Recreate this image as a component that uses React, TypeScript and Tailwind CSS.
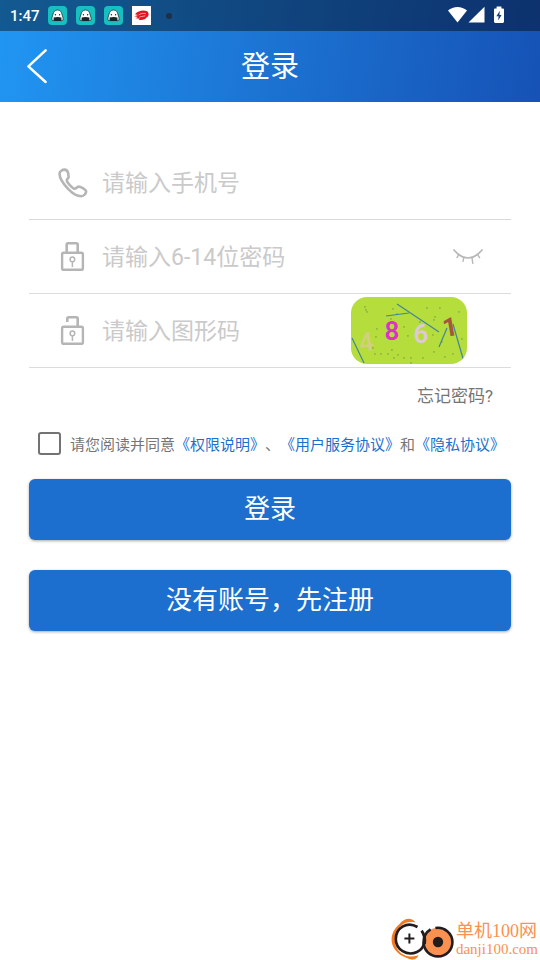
import React, { useState } from 'react';

const PhoneIcon = () => (
  <svg width="30" height="30" viewBox="0 0 30 30" fill="none" stroke="#b5b5b5" strokeWidth="2.6" strokeLinejoin="round">
    <path d="M1.6 5.2C1.8 3.4 4.4 1.6 6.4 1.6C8.6 1.6 9.8 3 10.2 5.2L10.6 8.6C10.7 10.4 8.6 11 8.8 12.6C9 14.6 14.6 20.4 16.6 20.8C18.2 21 18.8 18.6 20.6 18.6C22.4 18.6 27.6 21.2 28 23C28.4 25.4 26 28.2 23.2 28.2C19.6 28.2 14.6 25.4 10.8 21.6C6 16.6 1.2 9.4 1.6 5.2Z" />
  </svg>
);

const LockIcon = ({ open = false }) => (
  <svg width="30" height="30" viewBox="0 1 30 30" fill="none" stroke="#b5b5b5">
    {/* shackle */}
    <path strokeWidth="2.6" strokeLinejoin="round" d={open ? 'M9.3 7V3.6Q9.3 2.3 10.6 2.3H18.4Q19.7 2.3 19.7 3.6V11' : 'M8.7 11V3.6Q8.7 2.3 10 2.3H18.4Q19.7 2.3 19.7 3.6V11'} />
    <rect x="4.1" y="11.8" width="20.8" height="17" rx="1.6" strokeWidth="2.4" />
    <circle cx="14.4" cy="18.4" r="2.3" strokeWidth="1.5" />
    <path strokeWidth="1.5" d="M14.4 20.8V26" />
  </svg>
);

const ClosedEyeIcon = () => (
  <svg width="30" height="16" viewBox="0 0 30 16" fill="none" stroke="#b8b8b8" strokeLinecap="round">
    <path strokeWidth="1.7" d="M1 1C5 5.8 9.6 9 15 9S25 5.8 29 1" />
    <path strokeWidth="1.4" d="M5.6 5.8L4 8.6M10.8 8.6L10 12.4M19 8.8L19.8 14.4M24.8 5.8L26.6 8.6" />
  </svg>
);

const ghosts = [1, 2, 3];

const GhostIcon = () => (
  <svg width="19" height="19" viewBox="0 0 19 19">
    <rect width="19" height="19" rx="4" fill="#17bfc0" />
    <path d="M3.8 13C3.8 11.4 4.4 10.8 4.8 9C5.4 5.8 6.8 4 9.5 4S13.6 5.8 14.2 9C14.6 10.8 15.2 11.4 15.2 13Q15.2 14.6 14 14.6H5Q3.8 14.6 3.8 13Z" fill="#fff" stroke="#16383c" strokeWidth=".8" />
    <path d="M5.6 11.6Q9.5 10.6 13.4 11.6V13.4Q13.4 15 12 15H7Q5.6 15 5.6 13.4Z" fill="#12272a" />
    <circle cx="7.4" cy="8.8" r=".7" fill="#12272a" />
    <circle cx="11.6" cy="8.8" r=".7" fill="#12272a" />
  </svg>
);

const StatusBar = () => (
  <div className="flex h-[31px] items-center bg-black/40 pl-2.5 pr-[35px]">
    <span className="w-[38px] text-[15px] leading-5 font-medium">1:47</span>
    <div className="flex flex-1 items-center gap-[9px]">
      {ghosts.map((id) => <GhostIcon key={id} />)}
      <svg width="19" height="19" viewBox="0 0 19 19">
        <rect width="19" height="19" fill="#fff" />
        <path d="M3 8.2C6 4.8 11 3.8 15 5.2C17.4 7 17 10 14.6 11.6C13.4 13.6 10 14.6 6.4 13.8L8 12.8L3.4 12.2L6 11L2.4 10.2L6 9Z" fill="#e3131f" />
        <path d="M6.6 9C8.6 7.4 11.4 7 13.8 7.6M7.4 11.2C9 10.4 10.8 10.4 13.4 9.8" fill="none" stroke="#fff" strokeWidth=".6" />
      </svg>
      <span className="ml-1.5 h-1.5 w-1.5 rounded-full bg-[#1d3048]" />
    </div>
    <svg width="57" height="19" viewBox="0 0 57 19" fill="#fff">
      <path d="M0 4.6C5.4-.2 13.6-.2 19 4.6L9.5 16.4Z" />
      <path d="M36.5 .8V16.6H20.5Z" />
      <path d="M48.6 .6H53.4V2.4H55Q56 2.4 56 3.4V15.6Q56 17 54.8 17H47.2Q46 17 46 15.6V3.4Q46 2.4 47 2.4H48.6Z" />
      <path d="M51.8 4.8L48.4 10.2H50.6L50.2 14.6L53.6 9H51.4Z" fill="#12407c" />
    </svg>
  </div>
);

// positions of the noise dots on the captcha
const dots = [[14, 10], [16, 15], [42, 12], [76, 11], [89, 11], [84, 20], [83, 23], [26, 32], [25, 40], [22, 51], [24, 57], [30, 57], [37, 57], [41, 53], [47, 58], [43, 61], [53, 61], [60, 61], [72, 61], [83, 55], [102, 57], [108, 15], [60, 66], [91, 45], [53, 30], [46, 17], [100, 38], [57, 39], [69, 25], [40, 22], [82, 38], [94, 60], [111, 42], [15, 13]];

const Captcha = () => (
  <button type="button" aria-label="刷新图形码" className="mr-11 h-[67px] w-[116px] shrink-0 overflow-hidden rounded-2xl">
    <svg width="116" height="67" viewBox="0 0 116 67" className="bg-[#b5dd3b]" fontFamily="Roboto, sans-serif" fontSize="26" textAnchor="middle">
      {dots.map(([x, y], i) => <rect key={i} x={x - 1} y={y - 1} width="1.8" height="1.8" fill="#92b944" />)}
      <text x="15" y="54" fill="#d2d07f" fontWeight="500" transform="rotate(-8 15 44)">4</text>
      <text x="41" y="43" fill="#e12fc9" fontWeight="600">8</text>
      <text x="70" y="46" fill="#dfc9d6" fontWeight="600">6</text>
      <text x="99" y="39" fill="#a4573d" fontWeight="700" transform="rotate(-10 99 30)">1</text>
      <path d="M46 7L88 35M35 19L58 16M1 41L13 66M96 31L88 50M102 27L113 65" fill="none" stroke="#43859a" strokeWidth="1.2" />
    </svg>
  </button>
);

const Field = ({ id, label, type = 'text', icon, line = 'border-[#dcdcdc]', children = null }) => (
  <div className={`flex h-[74px] items-center border-b ${line} pl-[29px]`}>
    <label htmlFor={id} aria-label={label} className="mr-3.5 w-[30px] shrink-0">{icon}</label>
    <input id={id} type={type} placeholder={label} className="min-w-0 flex-1 bg-transparent pt-0.5 text-[23px] leading-8 text-[#333] outline-none placeholder:text-[#cacaca]" />
    {children}
  </div>
);

const Logo = () => (
  <svg width="66" height="42" viewBox="0 0 66 42" fill="none">
    <path d="M8.5 6C13 .2 20.5-1.4 24.5 4.5C18 3.2 13 4.6 9.5 8.4C1.5 17 2.4 29 10.5 35.6C15 39 21 39.2 27.5 37.2C25.5 42 20.5 42.6 15.5 39.8C-2 33.4-3.8 16.4 8.5 6Z" transform="translate(1)" fill="#f47a20" />
    <circle cx="48" cy="24" r="14.3" fill="#fa9150" />
    <path d="M27.5 9C16.5 2.8 5.8 10.4 5.8 21C5.8 31.6 17 38.4 27 34C31.4 32 33.8 28 34 24" stroke="#231c1d" strokeWidth="2.6" />
    <path d="M31.6 12.6C34.6 17 35.4 21 34.6 26" stroke="#231c1d" strokeWidth="2.8" />
    <path d="M40.6 11.4C36.4 14 33.6 18.4 33.6 24C33.6 32.4 40 38.4 48 38.4S62.4 32.4 62.4 24C62.4 15.4 54.4 8.4 45.4 10" stroke="#231c1d" strokeWidth="2.6" />
    <circle cx="48" cy="24" r="5.2" fill="#231c1d" />
    <path d="M19.4 15.5V25.5M14.4 20.5H24.4" stroke="#231c1d" strokeWidth="2" />
  </svg>
);

export default function App() {
  const [agreed, setAgreed] = useState(false);

  return (
    <div className="flex min-h-screen flex-col bg-white font-[Roboto,'Noto_Sans_CJK_SC',sans-serif]">
      <header className="bg-linear-100 from-[#2196f3] via-[#1c73d2] to-[#1652b6] text-white">
        <StatusBar />
        <div className="grid h-[71px] grid-cols-[1fr_auto_1fr] items-center px-[26px]">
          <button type="button" aria-label="返回" className="justify-self-start">
            <svg width="22" height="36" viewBox="0 1 22 36" fill="none" stroke="#fff" strokeWidth="2.5" strokeLinecap="round" strokeLinejoin="round">
              <path d="M19.6 2.4L2.4 18.4L19.6 34" />
            </svg>
          </button>
          <h1 className="text-[29px] leading-10">登录</h1>
        </div>
      </header>

      <form className="flex flex-col px-[29px] pt-11" onSubmit={(e) => e.preventDefault()}>
        <Field id="phone" label="请输入手机号" icon={<PhoneIcon />} line="border-[#d8d8e2]" />
        <Field id="password" type="password" label="请输入6-14位密码" icon={<LockIcon />}>
          <button type="button" aria-label="显示密码" className="mr-7 shrink-0"><ClosedEyeIcon /></button>
        </Field>
        <Field id="captcha" label="请输入图形码" icon={<LockIcon open />}>
          <Captcha />
        </Field>

        <a href="#forgot" className="mt-4 mr-[18px] self-end text-[17px] leading-6 text-[#757575]">忘记密码?</a>

        <div className="mt-[22px] flex items-center gap-[9px] pl-[9px]">
          <input id="agree" type="checkbox" checked={agreed} onChange={(e) => setAgreed(e.target.checked)} className="h-[23px] w-[23px] shrink-0 appearance-none rounded-[3px] border-2 border-[#737373] checked:bg-[#1c6fce]" />
          <label htmlFor="agree" className="whitespace-nowrap pt-[3px] text-[15px] leading-6 text-[#757575] [text-spacing-trim:space-all]">
            请您阅读并同意<a href="#permissions" className="text-[#1c6fce]">《权限说明》</a>、<a href="#terms" className="text-[#1c6fce]">《用户服务协议》</a>和<a href="#privacy" className="text-[#1c6fce]">《隐私协议》</a>
          </label>
        </div>

        <button type="submit" className="mt-[22px] h-[61px] rounded-md bg-[#1c6fce] text-[26px] text-white shadow-[0_1px_3px_rgba(0,0,0,0.35)]">登录</button>
        <button type="button" className="mt-[30px] h-[61px] rounded-md bg-[#1c6fce] text-[26px] text-white shadow-[0_1px_3px_rgba(0,0,0,0.35)]">没有账号，先注册</button>
      </form>

      <footer className="mt-auto flex items-center self-end pr-0.5 text-[#fa9150] font-['Liberation_Serif','Noto_Sans_CJK_SC',serif]">
        <Logo />
        <div>
          <p className="text-[18px] leading-5">单机100网</p>
          <p className="text-[15px] leading-4">danji100.com</p>
        </div>
      </footer>
    </div>
  );
}
